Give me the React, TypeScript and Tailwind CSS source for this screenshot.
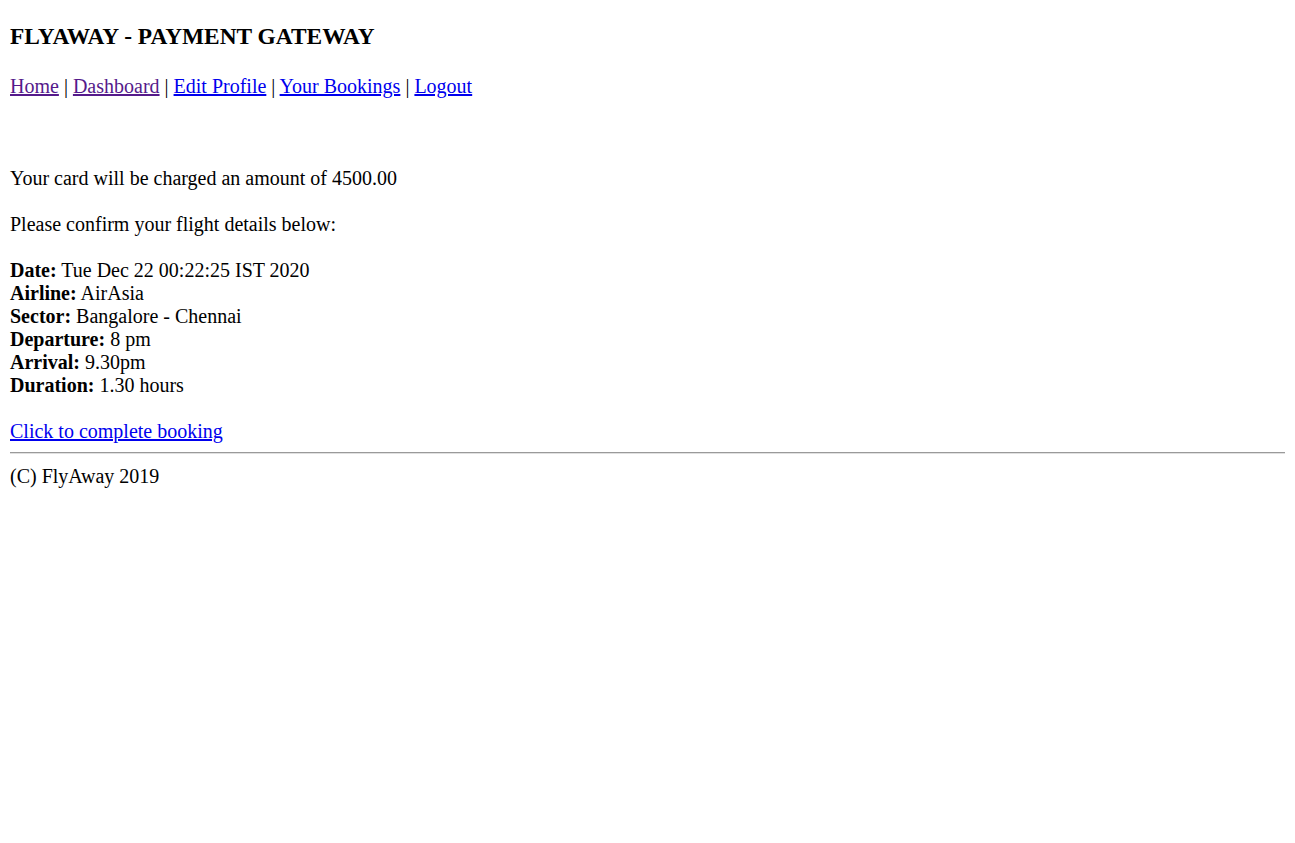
export default function App() {
  const details: [string, string][] = [
    ['Date:', 'Tue Dec 22 00:22:25 IST 2020'],
    ['Airline:', 'AirAsia'],
    ['Sector:', 'Bangalore - Chennai'],
    ['Departure:', '8 pm'],
    ['Arrival:', '9.30pm'],
    ['Duration:', '1.30 hours'],
  ]

  return (
    <div className="min-h-screen bg-white px-[10px] text-[20px] leading-[23px] text-black [font-family:'Liberation_Serif','Times_New_Roman',serif]">
      <h3 className="pt-[23px] text-[23.4px] font-bold leading-[27px]">FLYAWAY - PAYMENT GATEWAY</h3>
      <p className="mt-[25px]">
        <a href="#" className="text-[#551A8B] underline">Home</a> |{' '}
        <a href="#" className="text-[#551A8B] underline">Dashboard</a> |{' '}
        <a href="#" className="text-[#0000EE] underline">Edit Profile</a> |{' '}
        <a href="#" className="text-[#0000EE] underline">Your Bookings</a> |{' '}
        <a href="#" className="text-[#0000EE] underline">Logout</a>
      </p>
      <div className="mt-[69px]">
        <p>Your card will be charged an amount of 4500.00</p>
        <p className="mt-[23px]">Please confirm your flight details below:</p>
        <div className="mt-[23px]">
          {details.map(([k, v]) => (
            <div key={k}>
              <b>{k}</b> {v}
            </div>
          ))}
        </div>
        <p className="mt-[23px]">
          <a href="#" className="text-[#0000EE] underline">Click to complete booking</a>
        </p>
      </div>
      <hr className="mt-[9px] mb-[11px] border-t border-b border-t-[#9a9a9a] border-b-[#e0e0e0]" />
      <p>(C) FlyAway 2019</p>
    </div>
  )
}
